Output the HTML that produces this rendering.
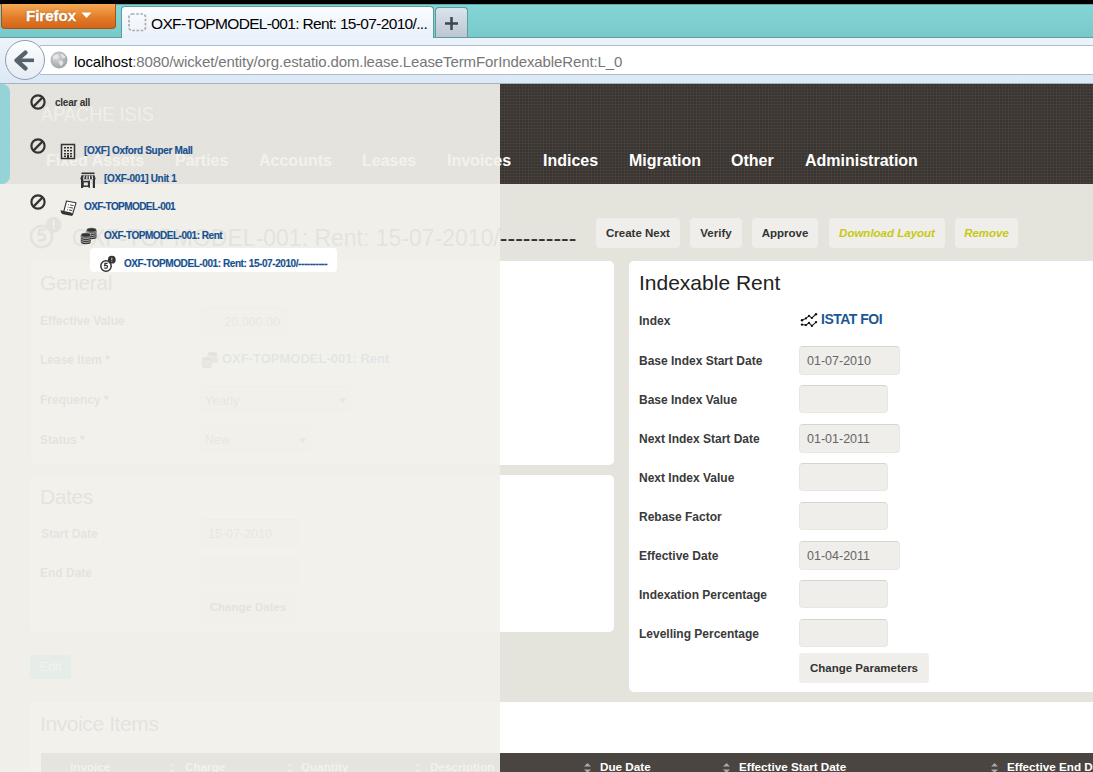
<!DOCTYPE html>
<html><head><meta charset="utf-8">
<style>
*{box-sizing:border-box;margin:0;padding:0}
html,body{width:1093px;height:772px;overflow:hidden;background:#e4e3dc}
body{position:relative;font-family:"Liberation Sans",sans-serif;color:#333}
.a{position:absolute;white-space:nowrap}
/* browser chrome */
#topblack{left:0;top:0;width:1093px;height:4px;background:#000}
#tabbar{left:0;top:4px;width:1093px;height:34px;background:linear-gradient(#84d5d5,#78caca);border-top:1px solid #5fa9a9}
#ffbtn{left:1px;top:4px;width:115px;height:25px;background:linear-gradient(#f5a955,#e17a26 60%,#d4641a);border-radius:0 0 4px 4px;border:1px solid #a65214;border-top:none;color:#fff;font-weight:bold;font-size:15px;line-height:24px;padding-left:24px;text-shadow:0 0 2px #8a3c00;-webkit-text-stroke:0.4px #fff}
#tab{left:121px;top:6px;width:313px;height:33px;background:linear-gradient(#fbfdff,#e9f0f9);border:1px solid #5e9a9e;border-bottom:none;border-radius:4px 4px 0 0}
#plus{left:435px;top:7px;width:33px;height:30px;background:linear-gradient(#dbe3ec,#bcc7d3);border:1px solid #5e9a9e;border-bottom:none;border-radius:4px 4px 0 0}
#navbar{left:0;top:38px;width:1093px;height:46px;background:linear-gradient(#edf3fb,#dce8f5);border-bottom:1px solid #a3b4c6}
#url{left:39px;top:45px;width:1060px;height:30px;background:#fff;border:1px solid #a8bdd4;border-radius:2px}
#back{left:5px;top:40px;width:40px;height:40px;border-radius:50%;background:linear-gradient(#fdfeff,#e4ebf3);border:1px solid #8e9eb0}
/* page */
#header{left:0;top:84px;width:1093px;height:100px;background-color:#39342f;background-image:linear-gradient(90deg,rgba(255,255,255,.045) 1px,transparent 1px),linear-gradient(0deg,rgba(255,255,255,.045) 1px,transparent 1px);background-size:3px 3px}
.nav{top:152px;color:#fff;font-weight:bold;font-size:16px;line-height:18px}
.btn{height:30px;top:218px;background:#efeeea;border-radius:4px;font-weight:bold;font-size:11.5px;line-height:30px;color:#333;text-align:center}
.btn.y{color:#c8c814;font-style:italic}
.panel{background:#fff;border-radius:5px}
.lbl{font-weight:bold;font-size:12px;color:#3a3a3a;line-height:14px}
.inp{background:#efeeea;border:1px solid #e8e7e2;border-top-color:#d6d5ce;border-radius:4px;font-size:12.5px;color:#666;line-height:27px;padding-left:7px;padding-top:1px}
.sel{padding-left:4px}
.th{top:760px;color:#fff;font-weight:bold;font-size:11.7px;line-height:14px}
.sort{top:762px;width:9px;height:12px}
/* overlay */
#overlay{left:0;top:84px;width:500px;height:688px;background:rgba(241,240,235,.93)}
.bc{color:#17508f;font-weight:bold;font-size:10px;line-height:12px;letter-spacing:-0.33px;-webkit-text-stroke:0.15px #17508f}
</style></head><body>

<!-- ============ BROWSER CHROME ============ -->
<div class="a" id="tabbar"></div>
<div class="a" id="topblack"></div>
<div class="a" id="ffbtn">Firefox<svg style="position:absolute;left:79px;top:8px" width="11" height="7" viewBox="0 0 11 7"><path d="M0.5 0.5H10.5L5.5 6Z" fill="#fff"/></svg></div>
<div class="a" style="left:0;top:37px;width:1093px;height:1px;background:#5e9e9f"></div>
<div class="a" id="plus"><svg style="position:absolute;left:9px;top:9px" width="13" height="13" viewBox="0 0 13 13"><path d="M6.5 0V13M0 6.5H13" stroke="#3c4650" stroke-width="2.5"/></svg></div>
<div class="a" id="tab">
  <svg class="a" style="left:6px;top:6px" width="19" height="19" viewBox="0 0 19 19"><rect x="1" y="1" width="16.5" height="16.5" rx="3" fill="none" stroke="#a9acb1" stroke-width="1.7" stroke-dasharray="2.6 1.6"/></svg>
  <div class="a" style="left:29px;top:7px;font-size:15.5px;line-height:20px;color:#000;letter-spacing:-0.66px">OXF-TOPMODEL-001: Rent: 15-07-2010/...</div>
</div>
<div class="a" id="navbar"></div>
<div class="a" id="url"></div>
<div class="a" id="back"><svg style="position:absolute;left:8px;top:9px" width="24" height="22" viewBox="0 0 24 22"><path d="M11.4 2.6L2.6 10.3L11.4 18.3" stroke="#56626e" stroke-width="4.4" fill="none" stroke-linecap="round" stroke-linejoin="round"/><path d="M5 10.3H20" stroke="#56626e" stroke-width="3.6"/></svg></div>
<svg class="a" style="left:50px;top:51px" width="18" height="18" viewBox="0 0 18 18"><defs><radialGradient id="gg" cx="0.4" cy="0.35" r="0.7"><stop offset="0" stop-color="#d8dadc"/><stop offset="1" stop-color="#9a9ea3"/></radialGradient></defs><circle cx="9" cy="9" r="8.5" fill="url(#gg)"/><path d="M3 5.5Q5 3 8 3.5L9 6L7 8L5 7.5L3.5 9Z M10.5 2.5Q14 3 15.5 6L14 7.5L12 6.5Z M8.5 10L12 9.5L13.5 12L11 15.5L9.5 13Z" fill="#e9eaeb" opacity="0.9"/></svg>
<div class="a" style="left:74px;top:52px;font-size:15px;line-height:20px;color:#777;letter-spacing:-0.11px"><span style="color:#000">localhost</span>:8080/wicket/entity/org.estatio.dom.lease.LeaseTermForIndexableRent:L_0</div>

<!-- ============ PAGE ============ -->
<div class="a" id="header"></div>
<div class="a" style="left:41px;top:103px;font-size:20px;line-height:22px;color:#d9d5d0;transform:scaleX(0.91);transform-origin:0 0">APACHE ISIS</div>
<div class="a nav" style="left:46px">Fixed Assets</div>
<div class="a nav" style="left:175px">Parties</div>
<div class="a nav" style="left:259px">Accounts</div>
<div class="a nav" style="left:362px">Leases</div>
<div class="a nav" style="left:447px">Invoices</div>
<div class="a nav" style="left:543px">Indices</div>
<div class="a nav" style="left:629px">Migration</div>
<div class="a nav" style="left:731px">Other</div>
<div class="a nav" style="left:805px">Administration</div>

<!-- title -->
<svg class="a" style="left:29px;top:215px" width="35" height="36" viewBox="0 0 35 36"><circle cx="12.5" cy="21.6" r="10.6" fill="none" stroke="#333" stroke-width="2.6"/><path d="M16.3 14.8H10.5L9.8 19.6Q13.6 18.4 15.4 20.2Q17 22.2 15.2 24.4Q12.8 26.2 9.2 24.9" fill="none" stroke="#333" stroke-width="2.6"/><circle cx="24.6" cy="9.8" r="8" fill="#333"/><rect x="23.8" y="5" width="1.6" height="6" fill="#fff"/><rect x="23.8" y="12.3" width="1.6" height="1.6" fill="#fff"/></svg>
<div class="a" style="left:72px;top:224px;font-size:23px;line-height:28px;color:#333">OXF-TOPMODEL-001: Rent: 15-07-2010/----------</div>

<div class="a btn" style="left:596px;width:84px">Create Next</div>
<div class="a btn" style="left:690px;width:52px">Verify</div>
<div class="a btn" style="left:752px;width:66px">Approve</div>
<div class="a btn y" style="left:829px;width:116px">Download Layout</div>
<div class="a btn y" style="left:955px;width:63px">Remove</div>

<!-- General panel -->
<div class="a panel" style="left:31px;top:261px;width:583px;height:204px"></div>
<div class="a" style="left:40px;top:271px;font-size:21px;line-height:24px;color:#333;letter-spacing:-0.4px">General</div>
<div class="a lbl" style="left:40px;top:314px">Effective Value</div>
<div class="a inp" style="left:200px;top:307px;width:89px;height:28px;text-align:right;padding-right:8px">20,000.00</div>
<div class="a lbl" style="left:40px;top:353px">Lease Item *</div>
<svg class="a" style="left:201px;top:351px" width="17" height="18" viewBox="0 0 17 18"><rect x="6.5" y="3" width="10" height="7" fill="#333"/><ellipse cx="11.5" cy="10" rx="5" ry="2.2" fill="#333"/><path d="M6.5 5.6Q11.5 7.9 16.5 5.6M6.5 7.6Q11.5 9.9 16.5 7.6M6.5 9.6Q11.5 11.9 16.5 9.6" stroke="#d8d8d8" stroke-width="0.7" fill="none"/><ellipse cx="11.5" cy="3" rx="5" ry="2.2" fill="#333" stroke="#f0f0f0" stroke-width="0.5"/><rect x="0.7999999999999998" y="8" width="10" height="7" fill="#333"/><ellipse cx="5.8" cy="15" rx="5" ry="2.2" fill="#333"/><path d="M0.7999999999999998 10.6Q5.8 12.9 10.8 10.6M0.7999999999999998 12.6Q5.8 14.9 10.8 12.6M0.7999999999999998 14.6Q5.8 16.9 10.8 14.6" stroke="#d8d8d8" stroke-width="0.7" fill="none"/><ellipse cx="5.8" cy="8" rx="5" ry="2.2" fill="#333" stroke="#f0f0f0" stroke-width="0.5"/></svg><div class="a" style="left:222px;top:351px;font-size:13px;font-weight:bold;color:#1c5795;line-height:16px">OXF-TOPMODEL-001: Rent</div>
<div class="a lbl" style="left:40px;top:393px">Frequency *</div>
<div class="a inp sel" style="left:200px;top:386px;width:151px;height:27px">Yearly<svg style="position:absolute;left:138px;top:11px" width="7" height="5" viewBox="0 0 7 5"><path d="M0 0H7L3.5 5Z" fill="#666"/></svg></div>
<div class="a lbl" style="left:40px;top:433px">Status *</div>
<div class="a inp sel" style="left:200px;top:425px;width:111px;height:28px">New<svg style="position:absolute;left:98px;top:12px" width="7" height="5" viewBox="0 0 7 5"><path d="M0 0H7L3.5 5Z" fill="#666"/></svg></div>

<!-- Dates panel -->
<div class="a panel" style="left:30px;top:475px;width:584px;height:157px"></div>
<div class="a" style="left:40px;top:485px;font-size:21px;line-height:24px;color:#333;letter-spacing:-0.4px">Dates</div>
<div class="a lbl" style="left:41px;top:527px">Start Date</div>
<div class="a inp" style="left:200px;top:519px;width:100px;height:29px">15-07-2010</div>
<div class="a lbl" style="left:40px;top:566px">End Date</div>
<div class="a inp" style="left:200px;top:558px;width:100px;height:27px"></div>
<div class="a btn" style="left:200px;top:592px;width:96px">Change Dates</div>

<div class="a" style="left:30px;top:655px;width:41px;height:24px;background:#53b9c9;border-radius:3px;color:#fff;font-size:13px;line-height:24px;text-align:center">Edit</div>

<!-- Indexable Rent panel -->
<div class="a panel" style="left:629px;top:261px;width:470px;height:431px"></div>
<div class="a" style="left:639px;top:271px;font-size:21px;line-height:24px;color:#222">Indexable Rent</div>
<div class="a lbl" style="left:639px;top:314px">Index</div>
<svg class="a" style="left:800px;top:313px" width="18" height="15" viewBox="0 0 18 15"><g stroke="#222" stroke-width="1.05" fill="none"><path d="M2 7.3L5.9 5.4L9 2.9L11.9 5L16 1"/><path d="M2 11.6L5.9 12.1L9 9.8L11.9 12.9L16 9.1"/></g><g fill="#111"><circle cx="2" cy="7.3" r="1.2"/><circle cx="5.9" cy="5.4" r="1.1"/><circle cx="9" cy="2.9" r="1.1"/><circle cx="11.9" cy="5" r="1.1"/><circle cx="16" cy="1.3" r="1.2"/><circle cx="2" cy="11.6" r="1.2"/><circle cx="5.9" cy="12.1" r="1.1"/><circle cx="9" cy="9.8" r="1.1"/><circle cx="11.9" cy="12.9" r="1.1"/><circle cx="16" cy="9.1" r="1.2"/></g></svg>
<div class="a" style="left:821px;top:312px;font-size:14px;font-weight:bold;color:#1c5795;line-height:15px;letter-spacing:-0.5px">ISTAT FOI</div>

<div class="a lbl" style="left:639px;top:354px">Base Index Start Date</div>
<div class="a inp" style="left:799px;top:346px;width:101px;height:29px">01-07-2010</div>
<div class="a lbl" style="left:639px;top:393px">Base Index Value</div>
<div class="a inp" style="left:799px;top:385px;width:89px;height:28px"></div>
<div class="a lbl" style="left:639px;top:432px">Next Index Start Date</div>
<div class="a inp" style="left:799px;top:424px;width:101px;height:29px">01-01-2011</div>
<div class="a lbl" style="left:639px;top:471px">Next Index Value</div>
<div class="a inp" style="left:799px;top:463px;width:89px;height:28px"></div>
<div class="a lbl" style="left:639px;top:510px">Rebase Factor</div>
<div class="a inp" style="left:799px;top:502px;width:89px;height:28px"></div>
<div class="a lbl" style="left:639px;top:549px">Effective Date</div>
<div class="a inp" style="left:799px;top:541px;width:101px;height:29px">01-04-2011</div>
<div class="a lbl" style="left:639px;top:588px">Indexation Percentage</div>
<div class="a inp" style="left:799px;top:580px;width:89px;height:28px"></div>
<div class="a lbl" style="left:639px;top:627px">Levelling Percentage</div>
<div class="a inp" style="left:799px;top:619px;width:89px;height:28px"></div>
<div class="a btn" style="left:799px;top:653px;width:130px">Change Parameters</div>

<!-- white section -->
<div class="a" style="left:30px;top:702px;width:1070px;height:80px;background:#fff"></div>
<div class="a" style="left:40px;top:712px;font-size:21px;line-height:24px;color:#333;letter-spacing:-0.4px">Invoice Items</div>
<div class="a" style="left:41px;top:753px;width:1060px;height:30px;background:#4a4540"></div>
<div class="a th" style="left:70px">Invoice</div>
<div class="a th" style="left:185px">Charge</div>
<div class="a th" style="left:301px">Quantity</div>
<div class="a th" style="left:430px">Description</div>
<div class="a th" style="left:600px">Due Date</div>
<div class="a th" style="left:739px">Effective Start Date</div>
<div class="a th" style="left:1007px">Effective End Date</div>
<svg class="a sort" style="left:168px" viewBox="0 0 9 12"><path d="M1 4.5L4.5 1L8 4.5ZM1 7.5L4.5 11L8 7.5Z" fill="#aaa"/></svg>
<svg class="a sort" style="left:285px" viewBox="0 0 9 12"><path d="M1 4.5L4.5 1L8 4.5ZM1 7.5L4.5 11L8 7.5Z" fill="#aaa"/></svg>
<svg class="a sort" style="left:413px" viewBox="0 0 9 12"><path d="M1 4.5L4.5 1L8 4.5ZM1 7.5L4.5 11L8 7.5Z" fill="#aaa"/></svg>
<svg class="a sort" style="left:583px" viewBox="0 0 9 12"><path d="M1 4.5L4.5 1L8 4.5ZM1 7.5L4.5 11L8 7.5Z" fill="#aaa"/></svg>
<svg class="a sort" style="left:722px" viewBox="0 0 9 12"><path d="M1 4.5L4.5 1L8 4.5ZM1 7.5L4.5 11L8 7.5Z" fill="#aaa"/></svg>
<svg class="a sort" style="left:990px" viewBox="0 0 9 12"><path d="M1 4.5L4.5 1L8 4.5ZM1 7.5L4.5 11L8 7.5Z" fill="#aaa"/></svg>

<!-- ============ OVERLAY ============ -->
<div class="a" id="overlay"></div>
<div class="a" style="left:0;top:84px;width:10px;height:100px;background:#94d4d6;border-radius:0 8px 8px 0"></div>

<!-- breadcrumbs -->
<svg class="a" style="left:30px;top:94px" width="16" height="16" viewBox="0 0 16 16"><circle cx="8" cy="8" r="6.6" fill="none" stroke="#333" stroke-width="2.2"/><path d="M12.6 3.4L3.4 12.6" stroke="#333" stroke-width="2.2"/></svg>
<div class="a" style="left:55px;top:97px;font-size:10px;line-height:12px;color:#333;font-weight:bold;letter-spacing:-0.25px">clear all</div>

<svg class="a" style="left:30px;top:138px" width="16" height="16" viewBox="0 0 16 16"><circle cx="8" cy="8" r="6.6" fill="none" stroke="#333" stroke-width="2.2"/><path d="M12.6 3.4L3.4 12.6" stroke="#333" stroke-width="2.2"/></svg>
<svg class="a" style="left:60px;top:143px" width="16" height="17" viewBox="0 0 16 17"><rect x="1.5" y="1.5" width="13" height="14" fill="none" stroke="#333" stroke-width="1.5"/><g fill="#333"><rect x="4" y="4" width="2" height="1.5"/><rect x="7" y="4" width="2" height="1.5"/><rect x="10" y="4" width="2" height="1.5"/><rect x="4" y="7" width="2" height="1.5"/><rect x="7" y="7" width="2" height="1.5"/><rect x="10" y="7" width="2" height="1.5"/><rect x="4" y="10" width="2" height="1.5"/><rect x="7" y="10" width="2" height="1.5"/><rect x="10" y="10" width="2" height="1.5"/><rect x="4" y="12.5" width="2" height="1.5"/><rect x="7" y="12" width="2" height="3.5"/><rect x="10" y="12.5" width="2" height="1.5"/></g></svg>
<div class="a bc" style="left:84px;top:145px">[OXF] Oxford Super Mall</div>

<svg class="a" style="left:80px;top:172px" width="16" height="16" viewBox="0 0 16 16"><rect x="1.5" y="0.5" width="13" height="1.6" fill="#333"/><path d="M1.5 3.2H14.5L15.8 7.2H0.2Z" fill="#333"/><path d="M4.3 3.5L3.6 7M7 3.5L6.8 7M9.3 3.5L9.5 7M12 3.5L12.6 7" stroke="#eee" stroke-width="1.2"/><rect x="1" y="7" width="2.2" height="9" fill="#333"/><rect x="12.8" y="7" width="2.2" height="9" fill="#333"/><rect x="3" y="9.6" width="5.6" height="4.6" fill="none" stroke="#333" stroke-width="1.5"/><rect x="8.6" y="8.5" width="1.3" height="7.5" fill="#333"/></svg>
<div class="a bc" style="left:104px;top:173px">[OXF-001] Unit 1</div>

<svg class="a" style="left:30px;top:194px" width="16" height="16" viewBox="0 0 16 16"><circle cx="8" cy="8" r="6.6" fill="none" stroke="#333" stroke-width="2.2"/><path d="M12.6 3.4L3.4 12.6" stroke="#333" stroke-width="2.2"/></svg>
<svg class="a" style="left:60px;top:200px" width="17" height="17" viewBox="0 0 17 17"><path d="M6.5 1L16 2.8L12.5 14.5L3.5 12.5Z" fill="#fff" stroke="#333" stroke-width="1.1" stroke-linejoin="round"/><path d="M0.5 10.2L11.2 12.4Q12.8 13.8 12.4 15.9L2.8 14.2Q0.6 13 0.5 10.2Z" fill="#333"/><path d="M8.2 4.6L9 4.75M10 4.95L13.6 5.6M7.6 7.1L8.4 7.25M9.4 7.45L13 8.1M7 9.6L7.8 9.75M8.8 9.95L12.4 10.6" stroke="#333" stroke-width="0.9"/></svg>
<div class="a bc" style="left:84px;top:201px;letter-spacing:-0.58px">OXF-TOPMODEL-001</div>

<svg class="a" style="left:80px;top:227px" width="17" height="18" viewBox="0 0 17 18"><rect x="6.5" y="3" width="10" height="7" fill="#333"/><ellipse cx="11.5" cy="10" rx="5" ry="2.2" fill="#333"/><path d="M6.5 5.6Q11.5 7.9 16.5 5.6M6.5 7.6Q11.5 9.9 16.5 7.6M6.5 9.6Q11.5 11.9 16.5 9.6" stroke="#d8d8d8" stroke-width="0.7" fill="none"/><ellipse cx="11.5" cy="3" rx="5" ry="2.2" fill="#333" stroke="#f0f0f0" stroke-width="0.5"/><g><rect x="0.7999999999999998" y="8" width="10" height="7" fill="#333"/><ellipse cx="5.8" cy="15" rx="5" ry="2.2" fill="#333"/><path d="M0.7999999999999998 10.6Q5.8 12.9 10.8 10.6M0.7999999999999998 12.6Q5.8 14.9 10.8 12.6M0.7999999999999998 14.6Q5.8 16.9 10.8 14.6" stroke="#d8d8d8" stroke-width="0.7" fill="none"/><ellipse cx="5.8" cy="8" rx="5" ry="2.2" fill="#333" stroke="#f0f0f0" stroke-width="0.5"/></g></svg>
<div class="a bc" style="left:104px;top:230px;letter-spacing:-0.48px">OXF-TOPMODEL-001: Rent</div>

<div class="a" style="left:90px;top:248px;width:247px;height:24px;background:#fff;border-radius:4px"></div>
<svg class="a" style="left:99px;top:255px" width="18" height="18" viewBox="0 0 18 18"><circle cx="7" cy="11" r="5.2" fill="#fff" stroke="#333" stroke-width="1.5"/><path d="M8.6 8.4H6L5.7 10.6Q7.4 10 8.2 10.8Q8.9 11.7 8.1 12.7Q7 13.5 5.3 12.9" fill="none" stroke="#333" stroke-width="1.25"/><circle cx="12.8" cy="4.7" r="3.9" fill="#333"/><rect x="12.3" y="2.6" width="1" height="2.6" fill="#ccc"/><rect x="12.3" y="5.8" width="1" height="0.9" fill="#ccc"/></svg>
<div class="a bc" style="left:124px;top:258px;letter-spacing:-0.42px">OXF-TOPMODEL-001: Rent: 15-07-2010/----------</div>

</body></html>
